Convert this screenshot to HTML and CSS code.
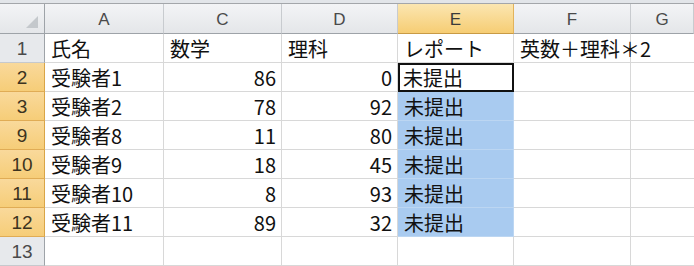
FILE: index.html
```html
<!DOCTYPE html>
<html lang="ja">
<head>
<meta charset="utf-8">
<link rel="stylesheet" href="styles.css">
</head>
<body>
<div class="topstrip"></div>
<div class="sheet">
  <div class="ch corner"><svg class="tri" width="12" height="12" viewBox="0 0 12 12"><polygon points="12,0 12,12 0,12" fill="#c4c8cc"/></svg></div>
  <div class="ch">A</div>
  <div class="ch">C</div>
  <div class="ch">D</div>
  <div class="ch sel">E</div>
  <div class="ch">F</div>
  <div class="ch last">G</div>

  <div class="rh">1</div>
  <div class="c">氏名</div>
  <div class="c">数学</div>
  <div class="c">理科</div>
  <div class="c">レポート</div>
  <div class="c ov">英数＋理科＊2</div>
  <div class="c last"></div>

  <div class="rh sel">2</div>
  <div class="c">受験者1</div>
  <div class="c n">86</div>
  <div class="c n">0</div>
  <div class="c active">未提出</div>
  <div class="c"></div>
  <div class="c last"></div>

  <div class="rh sel">3</div>
  <div class="c">受験者2</div>
  <div class="c n">78</div>
  <div class="c n">92</div>
  <div class="c blue">未提出</div>
  <div class="c"></div>
  <div class="c last"></div>

  <div class="rh sel">9</div>
  <div class="c">受験者8</div>
  <div class="c n">11</div>
  <div class="c n">80</div>
  <div class="c blue">未提出</div>
  <div class="c"></div>
  <div class="c last"></div>

  <div class="rh sel">10</div>
  <div class="c">受験者9</div>
  <div class="c n">18</div>
  <div class="c n">45</div>
  <div class="c blue">未提出</div>
  <div class="c"></div>
  <div class="c last"></div>

  <div class="rh sel">11</div>
  <div class="c">受験者10</div>
  <div class="c n">8</div>
  <div class="c n">93</div>
  <div class="c blue">未提出</div>
  <div class="c"></div>
  <div class="c last"></div>

  <div class="rh sel">12</div>
  <div class="c">受験者11</div>
  <div class="c n">89</div>
  <div class="c n">32</div>
  <div class="c blue">未提出</div>
  <div class="c"></div>
  <div class="c last"></div>

  <div class="rh">13</div>
  <div class="c"></div>
  <div class="c"></div>
  <div class="c"></div>
  <div class="c"></div>
  <div class="c"></div>
  <div class="c last"></div>
</div>
</body>
</html>
```

FILE: styles.css
```css
html, body {
  margin: 0;
  padding: 0;
  background: #ffffff;
  overflow: hidden;
}
.topstrip {
  height: 3px;
  background: #e2e5e9;
  border-bottom: 1px solid #a3a6aa;
}
.sheet {
  display: grid;
  grid-template-columns: 45px 119px 118px 116px 116px 117px 1fr;
  grid-template-rows: 30px repeat(8, 29px);
  font-family: "Noto Sans CJK JP", "Noto Sans", sans-serif;
  color: #111;
}
.ch {
  background: linear-gradient(#f3f4f6, #e4e6e9);
  border-right: 1px solid #c8cbcf;
  border-bottom: 1px solid #9ea3a8;
  display: flex;
  align-items: center;
  justify-content: center;
  font-family: "Liberation Sans", Arial, sans-serif;
  font-size: 17px;
  padding-top: 2px;
  color: #4a4a4a;
}
.ch.corner {
  justify-content: flex-end;
  align-items: flex-end;
  padding: 0 6px 5px 0;
  border-right-color: #9ea3a8;
}
.ch.sel {
  background: linear-gradient(#fbe6b1, #f6cd74);
  border-right-color: #e2b35b;
  border-bottom-color: #c89a45;
  color: #3a3a3a;
}
.rh {
  background: #e7e9ec;
  border-right: 1px solid #9ea3a8;
  border-bottom: 1px solid #c6c9cd;
  display: flex;
  align-items: center;
  justify-content: center;
  font-family: "Liberation Sans", Arial, sans-serif;
  font-size: 19px;
  padding-top: 2px;
  color: #4a4a4a;
}
.rh.sel {
  background: linear-gradient(#f9d99b, #f6cd78);
  border-right-color: #d9a547;
  border-bottom-color: #e0ac55;
  color: #3c3320;
}
.c {
  border-right: 1px solid #d8d8d8;
  border-bottom: 1px solid #d8d8d8;
  font-size: 20px;
  line-height: 27px;
  padding: 1px 4px 0 6px;
  white-space: nowrap;
  overflow: hidden;
}
.c.ov {
  overflow: visible;
  position: relative;
  z-index: 1;
}
.c.n {
  text-align: right;
  padding-right: 5px;
}
.c.last {
  border-right: none;
}
.c.blue {
  background: #a9cbf0;
  border-bottom-color: #bcd6f2;
  border-right-color: #bcd6f2;
}
.c.active {
  background: #ffffff;
  outline: 2px solid #111;
  outline-offset: -2px;
  padding-left: 5px;
}
```
